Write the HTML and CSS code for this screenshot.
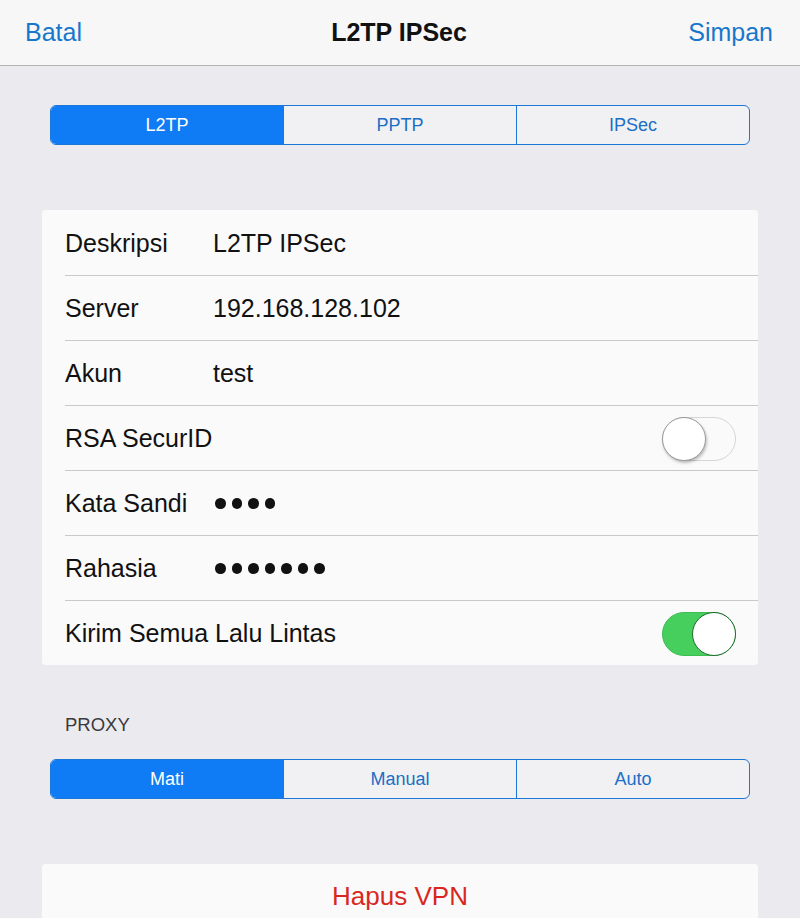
FILE: index.html
```html
<!DOCTYPE html>
<html lang="id">
<head>
    <meta charset="UTF-8">
    <meta name="viewport" content="width=device-width, initial-scale=1.0">
    <title>L2TP IPSec</title>
    <link rel="stylesheet" href="styles.css">
</head>
<body>
    <header class="nav-bar">
        <span class="nav-btn">Batal</span>
        <h1 class="nav-title">L2TP IPSec</h1>
        <span class="nav-btn right">Simpan</span>
    </header>

    <div class="segmented">
        <div class="segment active">L2TP</div>
        <div class="segment">PPTP</div>
        <div class="segment">IPSec</div>
    </div>

    <div class="card">
        <div class="row">
            <span class="label">Deskripsi</span>
            <span class="value">L2TP IPSec</span>
        </div>
        <div class="row">
            <span class="label">Server</span>
            <span class="value">192.168.128.102</span>
        </div>
        <div class="row">
            <span class="label">Akun</span>
            <span class="value">test</span>
        </div>
        <div class="row">
            <span class="label">RSA SecurID</span>
            <div class="switch"><div class="knob"></div></div>
        </div>
        <div class="row">
            <span class="label">Kata Sandi</span>
            <span class="dots"><i></i><i></i><i></i><i></i></span>
        </div>
        <div class="row">
            <span class="label">Rahasia</span>
            <span class="dots"><i></i><i></i><i></i><i></i><i></i><i></i><i></i></span>
        </div>
        <div class="row">
            <span class="label">Kirim Semua Lalu Lintas</span>
            <div class="switch on"><div class="knob"></div></div>
        </div>
    </div>

    <div class="section-title">PROXY</div>

    <div class="segmented proxy">
        <div class="segment active">Mati</div>
        <div class="segment">Manual</div>
        <div class="segment">Auto</div>
    </div>

    <div class="card delete-card">
        <span class="delete-btn">Hapus VPN</span>
    </div>
</body>
</html>
```

FILE: styles.css
```css
body {
    font-family: "Liberation Sans", Arial, sans-serif;
    background-color: #ebebef;
    color: #111;
    margin: 0;
    padding: 0;
    height: 918px;
    overflow: hidden;
}

/* navigation bar */
.nav-bar {
    height: 66px;
    background: #f7f7f8;
    border-bottom: 1px solid #b4b4b6;
    display: grid;
    grid-template-columns: 1fr auto 1fr;
    align-items: center;
    padding: 0 27px 0 25px;
    box-sizing: border-box;
}

.nav-btn {
    color: #1877cc;
    font-size: 25px;
}

.nav-btn.right {
    justify-self: end;
}

.nav-title {
    margin: 0;
    font-size: 25px;
    font-weight: bold;
    color: #111;
}

/* segmented control */
.segmented {
    margin: 39px 50px 0;
    height: 40px;
    display: flex;
    border: 1.5px solid #1c78d6;
    border-radius: 6px;
    overflow: hidden;
    box-sizing: border-box;
    background: #f1f1f4;
}

.segment {
    flex: 1;
    display: flex;
    align-items: center;
    justify-content: center;
    font-size: 18px;
    color: #1a6fc6;
    border-left: 1.5px solid #1c78d6;
}

.segment:first-child {
    border-left: none;
}

.segment.active {
    background: #0f7bf4;
    color: #fff;
}

/* table card */
.card {
    margin: 65px 42px 0;
    background: #fafafb;
    border-radius: 4px;
}

.row {
    height: 65px;
    display: flex;
    align-items: center;
    padding: 2px 22px 0 23px;
    box-sizing: border-box;
    position: relative;
    font-size: 25px;
}

.row + .row::before {
    content: "";
    position: absolute;
    top: 0;
    left: 23px;
    right: 0;
    height: 1px;
    background: #c9c9cc;
}

.label {
    width: 148px;
    white-space: nowrap;
}

.dots {
    display: flex;
    gap: 6px;
    padding-left: 2px;
}

.dots i {
    width: 10.5px;
    height: 10.5px;
    border-radius: 50%;
    background: #111;
}

.switch {
    margin-left: auto;
    width: 74px;
    height: 44px;
    border-radius: 22px;
    border: 1px solid #d6d6d8;
    background: #fafafa;
    box-sizing: border-box;
    position: relative;
}

.knob {
    position: absolute;
    top: -1px;
    left: -1px;
    width: 44px;
    height: 44px;
    border-radius: 50%;
    background: #fff;
    border: 1px solid #9a9a9a;
    box-sizing: border-box;
    box-shadow: 1px 2px 3px rgba(0, 0, 0, 0.25);
}

.switch.on {
    background: #47cf5e;
    border-color: #3bbd52;
}

.switch.on .knob {
    left: auto;
    right: -1px;
    border: 1.5px solid #1f6b2c;
    box-shadow: none;
}

.section-title {
    margin: 49px 0 0 65px;
    font-size: 18.5px;
    line-height: 22px;
    color: #3a3a3c;
}

.segmented.proxy {
    margin-top: 23px;
}

.delete-card {
    margin-top: 65px;
    height: 65px;
    display: flex;
    align-items: center;
    justify-content: center;
}

.delete-btn {
    color: #d8281e;
    font-size: 26px;
}
```
